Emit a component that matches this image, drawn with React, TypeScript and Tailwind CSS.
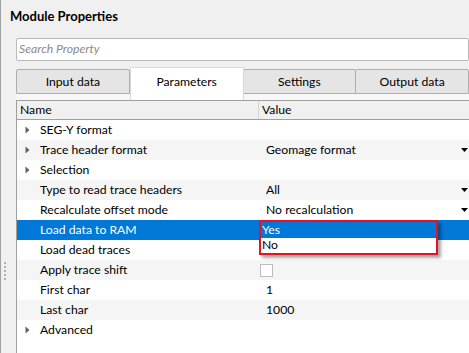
import React from 'react';

type Row = {
  name: string;
  value?: string;
  arrow?: boolean;
  combo?: boolean;
  check?: boolean;
  selected?: boolean;
};

const rows: Row[] = [
  { name: 'SEG-Y format', arrow: true },
  { name: 'Trace header format', arrow: true, value: 'Geomage format', combo: true },
  { name: 'Selection', arrow: true },
  { name: 'Type to read trace headers', value: 'All', combo: true },
  { name: 'Recalculate offset mode', value: 'No recalculation', combo: true },
  { name: 'Load data to RAM', selected: true },
  { name: 'Load dead traces' },
  { name: 'Apply trace shift', check: true },
  { name: 'First char', value: '1' },
  { name: 'Last char', value: '1000' },
  { name: 'Advanced', arrow: true },
];

const tabs = ['Input data', 'Parameters', 'Settings', 'Output data'];

const TreeArrow = () => (
  <svg width="5" height="8" viewBox="0 0 5 8" className="block">
    <path d="M0.5 0.5 L4.5 4 L0.5 7.5 Z" fill="#606060" />
  </svg>
);

const ComboArrow = () => (
  <svg width="7" height="4" viewBox="0 0 7 4" className="block">
    <path d="M0 0 H7 L3.5 4 Z" fill="#000" />
  </svg>
);

export default function App() {
  return (
    <div
      className="relative w-[469px] h-[353px] overflow-hidden bg-[#f0f0f0] border-l border-[#a0a0a0] text-[12.2px] text-black"
      style={{ fontFamily: 'Lato, "Noto Sans", sans-serif' }}
    >
      {/* titulo */}
      <div className="h-[31px] pl-[9px] pt-[6px] text-[13px] font-bold leading-[20px]">Module Properties</div>

      {/* busca */}
      <div className="ml-[15px] mt-[7px] h-[23px] bg-white border border-[#b9b9b9] rounded-[2px] flex items-center pl-[2px]">
        <span className="italic text-[#8a8a8a] leading-none">Search Property</span>
      </div>

      {/* abas */}
      <div className="ml-[15px] mt-[6px] h-[27px] flex items-start">
        {tabs.map((t) => {
          const active = t === 'Parameters';
          return active ? (
            <div
              key={t}
              className="relative z-10 w-[114px] h-[33px] bg-white border border-b-0 border-[#d9d9d9] rounded-t-[2px] flex justify-center pt-[6px] leading-[16px]"
            >
              {t}
            </div>
          ) : (
            <div
              key={t}
              className="mt-[2px] w-[114px] h-[25px] bg-[#e5e5e5] border border-[#adadad] rounded-t-[2px] flex items-center justify-center -ml-px first:ml-0 pt-[1px]"
            >
              {t}
            </div>
          );
        })}
      </div>

      {/* painel */}
      <div className="ml-[15px] h-[6px] bg-[#f7f7f7]" />

      {/* tabela */}
      <div className="ml-[15px] h-[260px] bg-white border-t border-l border-[#a0a0a0]">
        <div className="h-[19px] flex bg-[#f0f0f0] border-b border-[#a0a0a0]">
          <div className="w-[242px] pl-[3px] flex items-center border-r border-[#d5d5d5]">Name</div>
          <div className="pl-[3px] flex items-center">Value</div>
        </div>
        {rows.map((r, i) => (
          <div
            key={r.name}
            className={`h-[20px] flex items-center ${
              r.selected ? 'bg-[#0078d7] text-white' : i % 2 === 1 ? 'bg-[#f5f5f5]' : 'bg-white'
            }`}
          >
            <div className="w-[243px] flex items-center">
              <div className="w-[23px] flex justify-end pr-[10px]">{r.arrow && <TreeArrow />}</div>
              <span>{r.name}</span>
            </div>
            <div className="flex-1 flex items-center pl-[6px] pr-[1px]">
              {r.check ? (
                <div className="ml-[-6px] w-[13px] h-[13px] border border-[#bcbcbc] bg-white" />
              ) : (
                <span>{r.value}</span>
              )}
              {r.combo && (
                <div className="ml-auto">
                  <ComboArrow />
                </div>
              )}
            </div>
          </div>
        ))}
      </div>

      {/* lista aberta */}
      <div className="absolute left-[258px] top-[220px] w-[179px] h-[35px] border-2 border-[#e81123] bg-white shadow-[3px_3px_3px_rgba(0,0,0,0.35)]">
        <div className="h-[16px] bg-[#0078d7] text-white flex items-center pl-[1px]">Yes</div>
        <div className="h-[15px] flex items-center pl-[1px]">No</div>
      </div>

      {/* divisor */}
      <div className="absolute left-[3px] top-[262px] h-[18px] border-l-2 border-dotted border-[#b0b0b0]" />
    </div>
  );
}
